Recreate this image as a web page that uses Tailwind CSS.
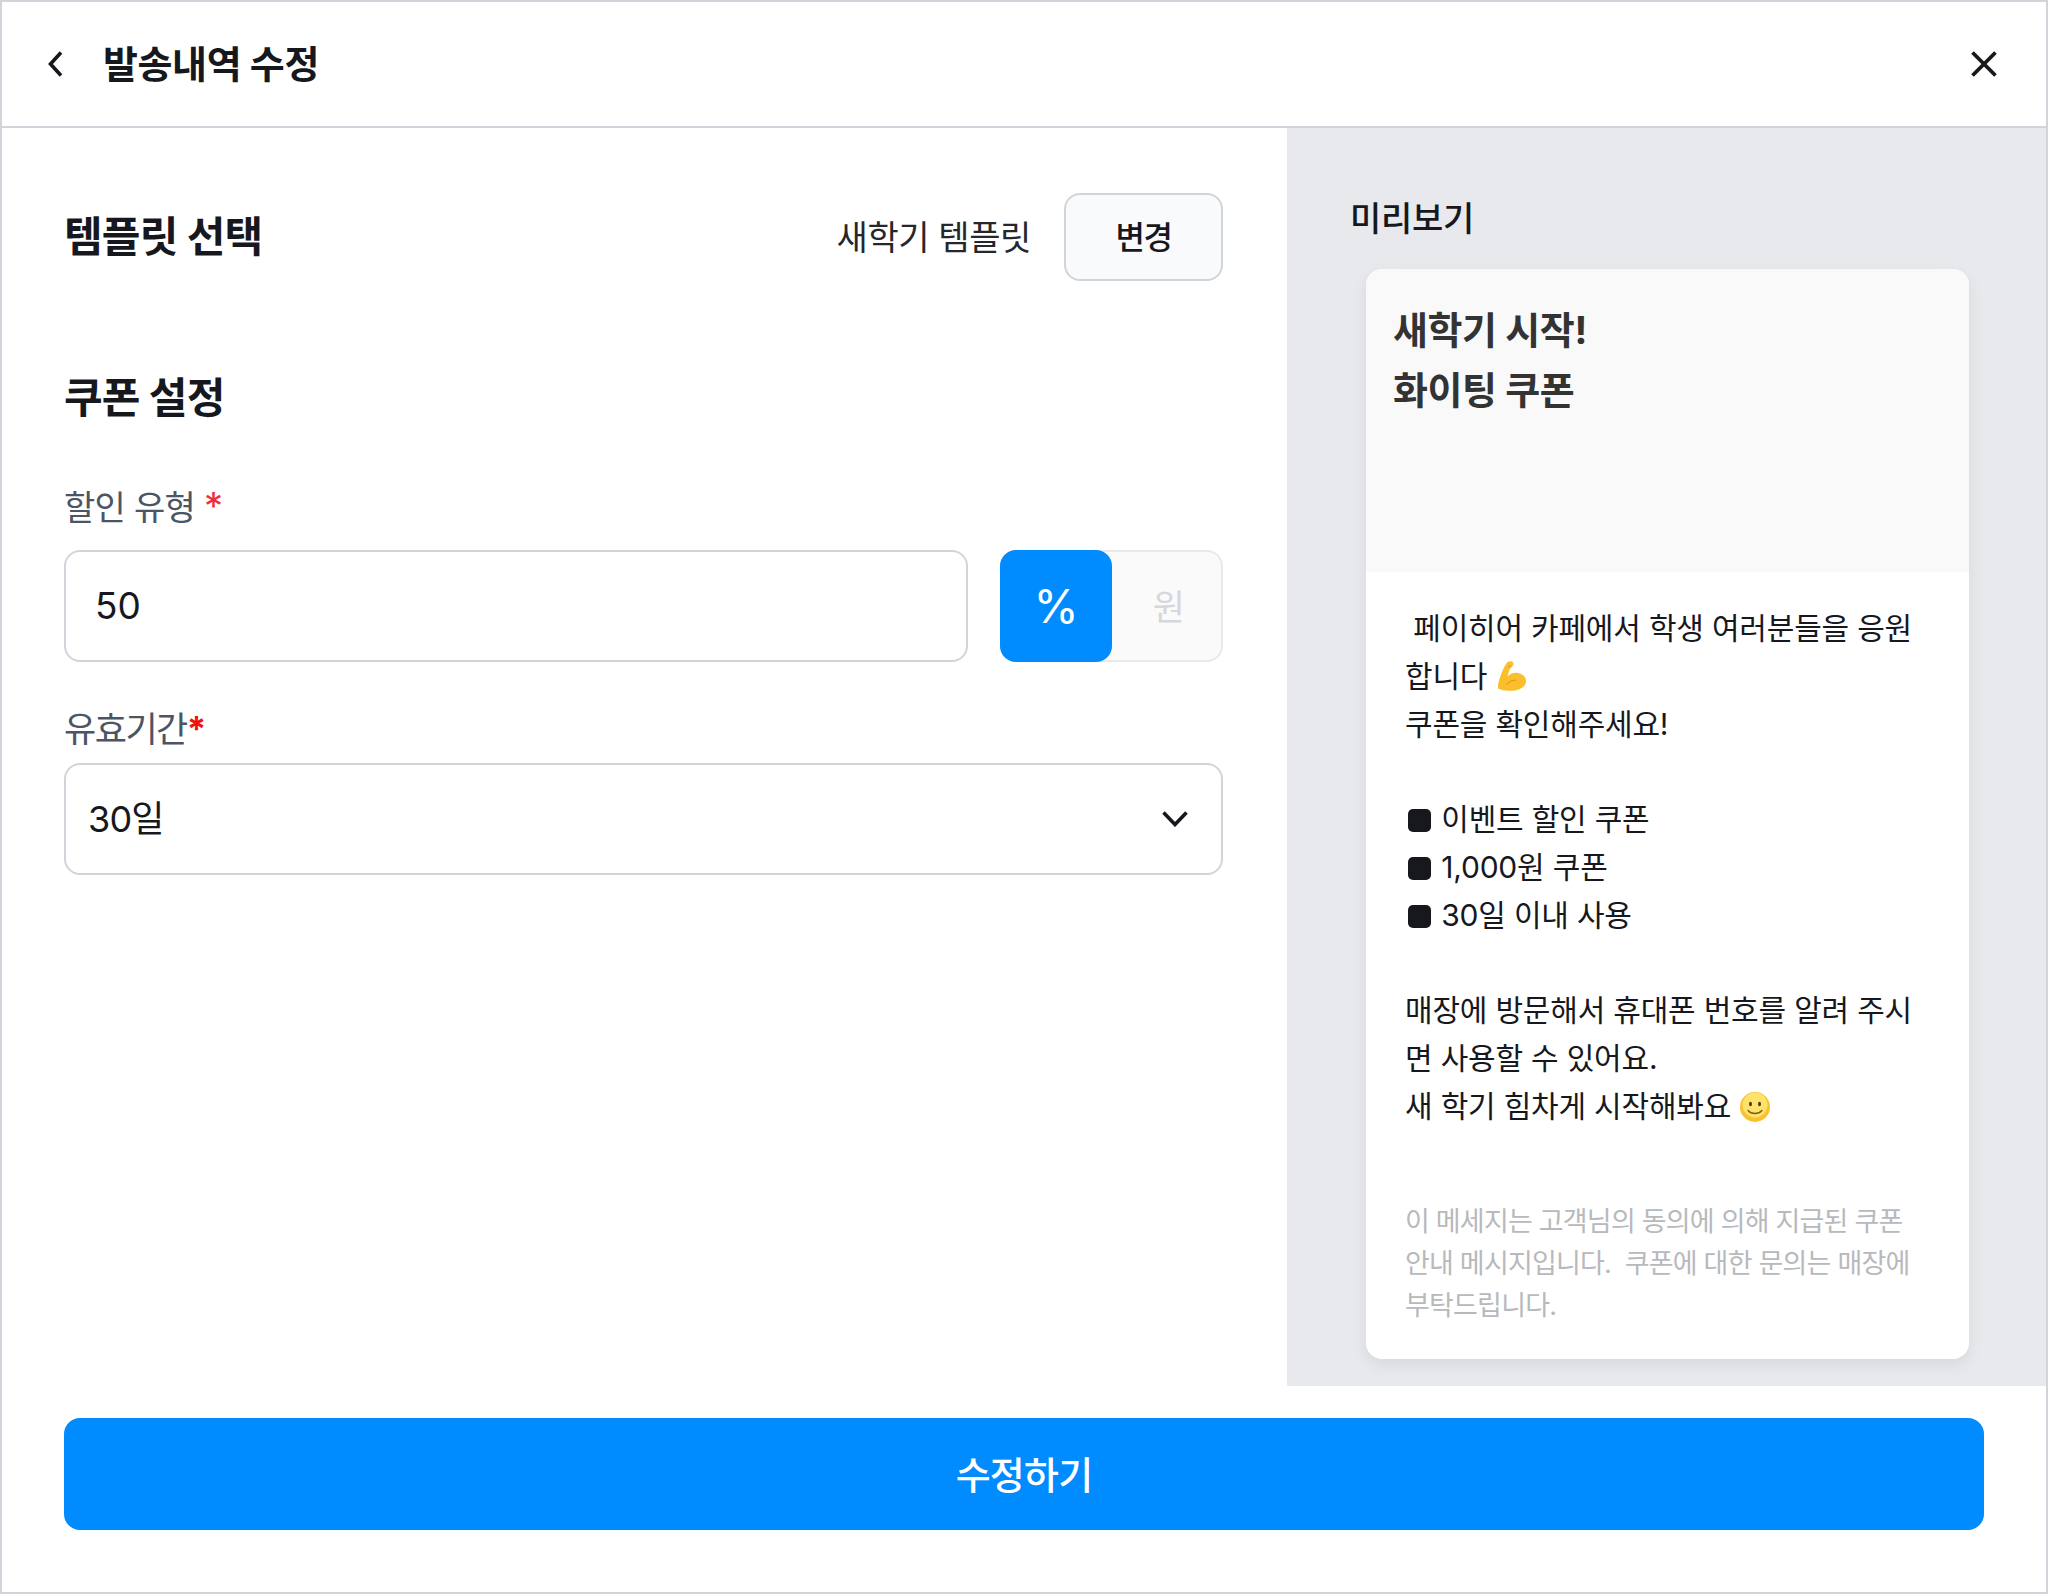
<!DOCTYPE html>
<html lang="ko">
<head>
    <meta charset="UTF-8">
    <script src="https://cdn.jsdelivr.net/npm/@tailwindcss/browser@4"></script>
    <title>발송내역 수정</title>
</head>
<body class="bg-white font-['Inter','Noto_Sans_CJK_KR',sans-serif] text-[#16181d]">
<div class="w-[2048px] h-[1594px] border-2 border-[#d1d5db] flex flex-col overflow-hidden">

    <!-- Header -->
    <div class="h-[126px] shrink-0 border-b-2 border-[#d1d5db] flex items-center pl-[46px] pr-[49px]">
        <svg class="w-[15px] h-[26px]" viewBox="0 0 15 26" fill="none" stroke="#16181d" stroke-width="3.6"><path d="M13 1.500 2.500 13 13 24.500"/></svg>
        <h1 class="ml-[40px] text-[38px] leading-[50px] font-bold tracking-[-0.4px]">발송내역 수정</h1>
        <svg class="ml-auto w-[26px] h-[26px]" viewBox="0 0 26 26" fill="none" stroke="#16181d" stroke-width="3.8"><path d="M1.500 1.500l23 23M24.500 1.500l-23 23"/></svg>
    </div>

    <!-- Body -->
    <div class="h-[1258px] shrink-0 flex">
        <div class="w-[1285px] shrink-0 pl-[62px] pr-[64px] pt-[65px]">
            <div class="h-[88px] flex items-center">
                <h2 class="text-[42px] font-bold leading-[60px] tracking-[-0.8px]">템플릿 선택</h2>
                <span class="ml-auto text-[34px] tracking-[-0.4px] text-[#25272c]">새학기 템플릿</span>
                <button class="ml-[33px] w-[159px] h-[88px] pt-[2px] rounded-[16px] border-2 border-[#d1d5db] bg-[#f9fafb] text-[32px] font-medium tracking-[-1.4px]">변경</button>
            </div>

            <h2 class="mt-[87px] text-[42px] font-bold leading-[60px] tracking-[-0.8px]">쿠폰 설정</h2>

            <div class="mt-[60px] text-[34px] leading-[40px] text-[#4b5563] tracking-[-0.7px]">할인 유형 <span class="text-[#ef2b3a] text-[38px] leading-[30px]">*</span></div>
            <div class="mt-[22px] flex gap-[32px]">
                <div class="w-[904px] h-[112px] rounded-[16px] border-2 border-[#d1d5db] flex items-center pl-[29px] text-[37px]">50</div>
                <div class="relative w-[223px] h-[112px] rounded-[16px] border-2 border-[#e8e9ed] bg-[#fafafa] flex items-center justify-end pr-[36px] pt-[2px] text-[35px] text-[#d5d7dc]">
                    원
                    <div class="absolute -left-[2px] -top-[2px] w-[112px] h-[112px] rounded-[16px] bg-[#008cff] flex items-center justify-center text-[46px] font-normal text-white">%</div>
                </div>
            </div>

            <div class="mt-[47px] text-[35px] leading-[40px] text-[#4b5563] tracking-[-1.5px]">유효기간<span class="text-[#f01010] font-bold">*</span></div>
            <div class="mt-[14px] h-[112px] rounded-[16px] border-2 border-[#d1d5db] flex items-center pl-[22px] pr-[33px] text-[36px] tracking-[-0.8px]">
                30일
                <svg class="ml-auto w-[26px] h-[16px]" viewBox="0 0 26 16" fill="none" stroke="#16181d" stroke-width="3.6"><path d="M1.500 1.500 13 13.500 24.500 1.500"/></svg>
            </div>
        </div>

        <!-- Preview -->
        <div class="flex-1 bg-[#e8e9ed] pt-[71px] pl-[63px] -mr-[2px]">
            <div class="text-[34px] leading-[40px] font-medium tracking-[-0.3px]">미리보기</div>
            <div class="mt-[30px] ml-[16px] w-[603px] h-[1090px] rounded-[16px] bg-white overflow-hidden shadow-[0_6px_16px_rgba(0,0,0,0.07)]">
                <div class="h-[303px] bg-[#f9f9f9] pl-[27px] pt-[31px] text-[38px] leading-[60px] font-bold text-[#333333] tracking-[-0.4px]">
                    새학기 시작!<br>화이팅 쿠폰
                </div>
                <div class="pl-[39px] pt-[33px] whitespace-nowrap">
                    <div class="text-[30px] leading-[47.8px] text-[#16181d] tracking-[-0.2px]">
                        &nbsp;페이히어 카페에서 학생 여러분들을 응원<br>
                        <span class="inline-flex items-center gap-[11px]">합니다
                            <svg class="w-[30px] h-[31px]" viewBox="0 0 30 31"><path fill="#fbbf2e" d="M9 1.500c2.200-1.600 5.500-1.800 6.200.2.5 1.700-.2 3.600-1.600 4.600-1.200.8-2 2-2.400 3.400-.5 1.900-1.300 3.800-1.600 5.700 2-2.300 5-3.800 8.600-3.700 5.200.2 9.800 3.500 9.800 8.200 0 6.400-7.800 9.900-15 9.900-5.400 0-10.500-.9-13-2.400C-.2 26.600-.2 24.200.5 21.500 2 15.500 4.500 8 9 1.500z"/><path fill="none" stroke="#dd9412" stroke-width="1" d="M10 5.500c1.200.2 2.200-.2 2.700-1M8 24c2.500-3 6-5 10-5"/></svg>
                        </span><br>
                        쿠폰을 확인해주세요!<br>
                        <br>
                        <span class="inline-block w-[23px] h-[23px] rounded-[5px] bg-[#16181d] ml-[3px] mr-[2px] align-[-2px]"></span> 이벤트 할인 쿠폰<br>
                        <span class="inline-block w-[23px] h-[23px] rounded-[5px] bg-[#16181d] ml-[3px] mr-[2px] align-[-2px]"></span> 1,000원 쿠폰<br>
                        <span class="inline-block w-[23px] h-[23px] rounded-[5px] bg-[#16181d] ml-[3px] mr-[2px] align-[-2px]"></span> 30일 이내 사용<br>
                        <br>
                        매장에 방문해서 휴대폰 번호를 알려 주시<br>
                        면 사용할 수 있어요.<br>
                        <span class="inline-flex items-center gap-[9px]">새 학기 힘차게 시작해봐요
                            <svg class="w-[30px] h-[30px]" viewBox="0 0 30 30"><circle cx="15" cy="15" r="15" fill="#fbc02d"/><circle cx="15" cy="13" r="12.500" fill="#fde26b"/><ellipse cx="10.500" cy="12" rx="1.500" ry="2.300" fill="#5b3a0d"/><ellipse cx="19.500" cy="12" rx="1.500" ry="2.300" fill="#5b3a0d"/><path d="M8 18.500c3.500 4 10.500 4 14 0" fill="none" stroke="#8a5a14" stroke-width="1.300" stroke-linecap="round"/></svg>
                        </span>
                    </div>
                    <div class="mt-[70px] text-[27px] leading-[42px] text-[#b8b9bc] tracking-[-0.8px]">
                        이 메세지는 고객님의 동의에 의해 지급된 쿠폰<br>
                        안내 메시지입니다.&nbsp; 쿠폰에 대한 문의는 매장에<br>
                        부탁드립니다.
                    </div>
                </div>
            </div>
        </div>
    </div>

    <!-- Footer -->
    <div class="px-[62px] pt-[32px]">
        <button class="w-full h-[112px] pt-[2px] rounded-[16px] bg-[#008cff] text-white text-[38px] font-medium tracking-[-0.8px]">수정하기</button>
    </div>
</div>
</body>
</html>
